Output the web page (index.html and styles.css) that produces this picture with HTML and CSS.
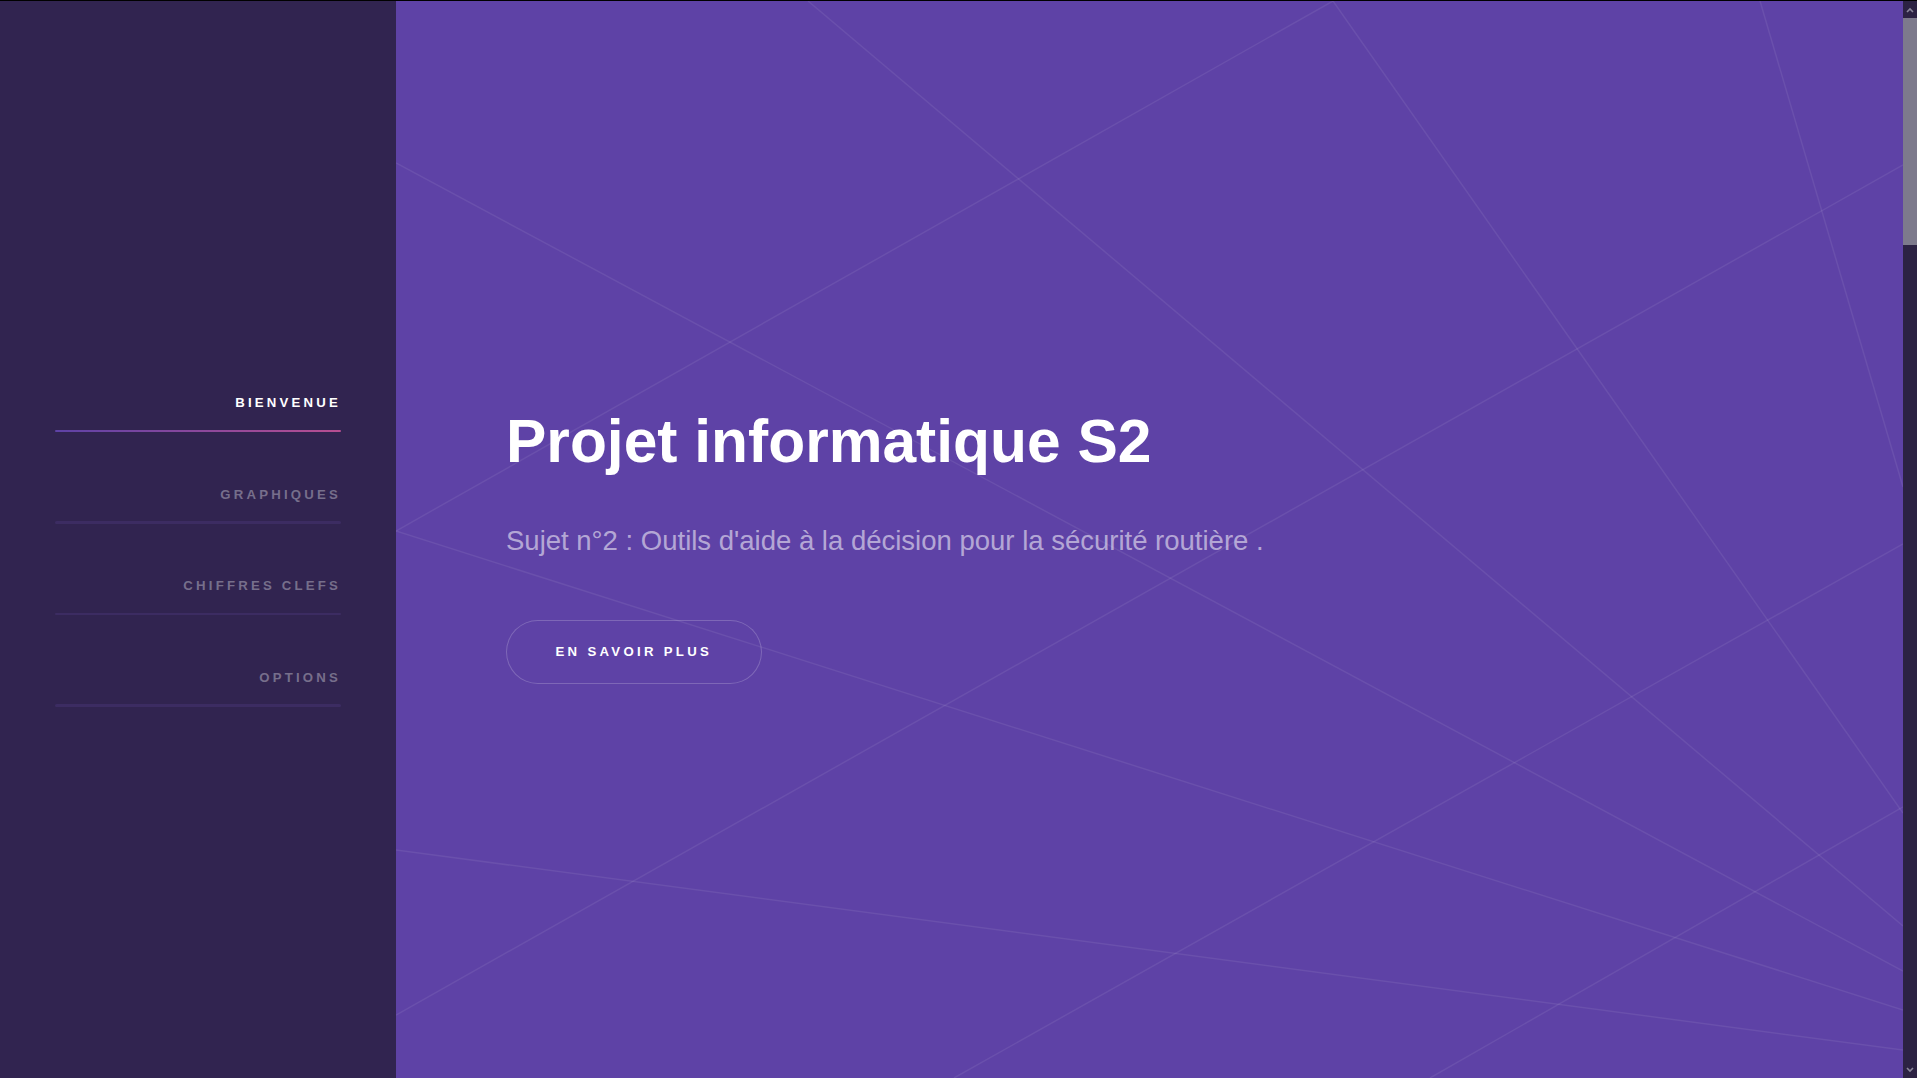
FILE: index.html
```html
<!DOCTYPE html>
<html lang="fr">
<head>
<meta charset="utf-8">
<title>Projet informatique S2</title>
<link rel="stylesheet" href="styles.css">
</head>
<body>
<div class="page">
  <aside class="sidebar">
    <nav class="nav">
      <ul>
        <li><a class="active" href="#intro">Bienvenue</a></li>
        <li><a href="#graphiques">Graphiques</a></li>
        <li><a href="#chiffres">Chiffres clefs</a></li>
        <li><a href="#options">Options</a></li>
      </ul>
    </nav>
  </aside>
  <main class="main">
    <svg class="bg-lines" viewBox="0 0 1507 1077" preserveAspectRatio="none" aria-hidden="true">
      <g stroke="#ffffff" stroke-opacity="0.075" stroke-width="1.5" fill="none">
        <line x1="412" y1="0" x2="1507" y2="925"/>
        <line x1="937" y1="0" x2="1507" y2="812"/>
        <line x1="1364" y1="0" x2="1507" y2="486"/>
        <line x1="0" y1="162" x2="1507" y2="970"/>
        <line x1="0" y1="530" x2="937" y2="0"/>
        <line x1="0" y1="530" x2="1507" y2="1009"/>
        <line x1="0" y1="849" x2="1507" y2="1049"/>
        <line x1="0" y1="1014" x2="1507" y2="164"/>
        <line x1="558" y1="1077" x2="1507" y2="543"/>
        <line x1="1034" y1="1077" x2="1507" y2="806"/>
      </g>
    </svg>
    <section class="intro">
      <h1>Projet informatique S2</h1>
      <p>Sujet n°2 : Outils d'aide à la décision pour la sécurité routière .</p>
      <a class="button" href="#graphiques">En savoir plus</a>
    </section>
  </main>
  <div class="scrollbar" aria-hidden="true">
    <div class="sb-btn">
      <svg width="8" height="6" viewBox="0 0 8 6"><polyline points="1,5 4,2 7,5" fill="none" stroke="#8b879b" stroke-width="1.6"/></svg>
    </div>
    <div class="sb-thumb"></div>
    <div class="sb-track"></div>
    <div class="sb-btn">
      <svg width="8" height="6" viewBox="0 0 8 6"><polyline points="1,1 4,4 7,1" fill="none" stroke="#8b879b" stroke-width="1.6"/></svg>
    </div>
  </div>
</div>
</body>
</html>
```

FILE: styles.css
```css
* {
  box-sizing: border-box;
}

html,
body {
  margin: 0;
  padding: 0;
}

body {
  background: #000;
  font-family: "Liberation Sans", Arial, Helvetica, sans-serif;
}

.page {
  display: flex;
  height: 1078px;
  border-top: 1px solid #000;
  overflow: hidden;
}

/* Sidebar */
.sidebar {
  width: 396px;
  flex: none;
  background: #312450;
  padding: 375px 55px 0;
}

.nav ul {
  list-style: none;
  margin: 0;
  padding: 0;
  display: flex;
  flex-direction: column;
  gap: 35.3px;
}

.nav a {
  position: relative;
  display: block;
  padding: 20px 0 23px;
  font-size: 13.2px;
  line-height: 13.2px;
  font-weight: bold;
  letter-spacing: 3.2px;
  text-transform: uppercase;
  text-align: right;
  color: rgba(255, 255, 255, 0.35);
  text-decoration: none;
}

.nav a::before {
  content: "";
  position: absolute;
  left: 0;
  right: 0;
  bottom: 0;
  height: 2.64px;
  border-radius: 2.64px;
  background: #3c2c62;
}

.nav a.active {
  color: #fff;
}

.nav a.active::before {
  background-image: linear-gradient(to right, #5e42a6, #b74e91);
}

/* Main */
.main {
  flex: 1;
  position: relative;
  background: #5e42a6;
  overflow: hidden;
}

.bg-lines {
  position: absolute;
  top: 0;
  left: 0;
  width: 100%;
  height: 100%;
}

.intro {
  position: relative;
  display: flex;
  flex-direction: column;
  align-items: flex-start;
  padding: 403.7px 110px 0;
}

.intro h1 {
  margin: 0;
  font-size: 60.5px;
  line-height: 72px;
  font-weight: bold;
  color: #fff;
}

.intro p {
  margin: 40px 0 0;
  font-size: 27.5px;
  line-height: 48.125px;
  color: rgba(255, 255, 255, 0.55);
}

.button {
  display: block;
  margin-top: 55.2px;
  height: 64px;
  line-height: 64px;
  padding: 0 49.5px;
  border-radius: 32px;
  box-shadow: inset 0 0 0 1px rgba(255, 255, 255, 0.2);
  font-size: 13.2px;
  font-weight: bold;
  letter-spacing: 3.3px;
  text-transform: uppercase;
  color: #fff;
  text-decoration: none;
}

/* Scrollbar */
.scrollbar {
  width: 14px;
  flex: none;
  background: #2c2243;
  display: flex;
  flex-direction: column;
}

.sb-btn {
  height: 17px;
  flex: none;
  display: flex;
  align-items: center;
  justify-content: center;
}

.sb-thumb {
  height: 227px;
  flex: none;
  background: #7d7a8c;
}

.sb-track {
  flex: 1;
}
```
